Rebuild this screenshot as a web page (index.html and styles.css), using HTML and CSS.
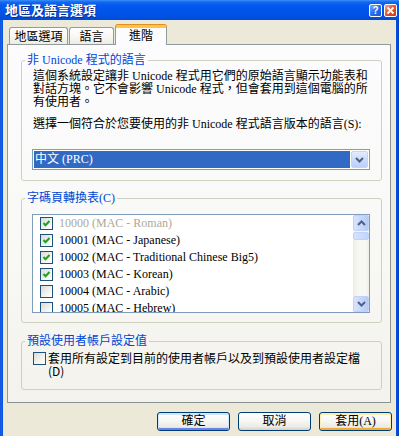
FILE: index.html
```html
<!DOCTYPE html>
<html lang="zh-Hant">
<head>
<meta charset="utf-8">
<title>地區及語言選項</title>
<link rel="stylesheet" href="styles.css">
</head>
<body>
<div class="window">
  <div class="titlebar">
    <span class="title">地區及語言選項</span>
    <div class="caption-buttons">
      <span class="cbtn help">?</span>
      <span class="cbtn close"><svg width="11" height="11" viewBox="0 0 11 11"><path d="M2.5 2.5 L8.5 8.5 M8.5 2.5 L2.5 8.5" stroke="#fff" stroke-width="1.8" fill="none"/></svg></span>
    </div>
  </div>
  <div class="client">
    <div class="tabs">
      <div class="tab t1">地區選項</div>
      <div class="tab t2">語言</div>
      <div class="tab active">進階</div>
    </div>
    <div class="panel">
      <fieldset class="group g1">
        <legend>非 Unicode 程式的語言</legend>
        <p class="desc">這個系統設定讓非 Unicode 程式用它們的原始語言顯示功能表和<br>對話方塊。它不會影響 Unicode 程式，但會套用到這個電腦的所<br>有使用者。</p>
        <p class="label">選擇一個符合於您要使用的非 Unicode 程式語言版本的語言(S):</p>
        <div class="combo">
          <div class="combo-value">中文 (PRC)</div>
          <div class="combo-btn"><svg width="9" height="6" viewBox="0 0 9 6"><polyline points="1,1 4.5,4.5 8,1" stroke="#4d6185" stroke-width="2" fill="none"/></svg></div>
        </div>
      </fieldset>
      <fieldset class="group g2">
        <legend>字碼頁轉換表(C)</legend>
        <div class="listbox">
          <div class="items">
            <div class="item disabled"><span class="chk"><svg width="11" height="11" viewBox="0 0 11 11"><polyline points="2.5,5 4.5,7.2 8.5,3" stroke="#21a121" stroke-width="2" fill="none"/></svg></span>10000 (MAC - Roman)</div>
            <div class="item"><span class="chk"><svg width="11" height="11" viewBox="0 0 11 11"><polyline points="2.5,5 4.5,7.2 8.5,3" stroke="#21a121" stroke-width="2" fill="none"/></svg></span>10001 (MAC - Japanese)</div>
            <div class="item"><span class="chk"><svg width="11" height="11" viewBox="0 0 11 11"><polyline points="2.5,5 4.5,7.2 8.5,3" stroke="#21a121" stroke-width="2" fill="none"/></svg></span>10002 (MAC - Traditional Chinese Big5)</div>
            <div class="item"><span class="chk"><svg width="11" height="11" viewBox="0 0 11 11"><polyline points="2.5,5 4.5,7.2 8.5,3" stroke="#21a121" stroke-width="2" fill="none"/></svg></span>10003 (MAC - Korean)</div>
            <div class="item"><span class="chk"></span>10004 (MAC - Arabic)</div>
            <div class="item"><span class="chk"></span>10005 (MAC - Hebrew)</div>
          </div>
          <div class="vscroll">
            <div class="sbtn"><svg width="9" height="6" viewBox="0 0 9 6"><polyline points="1,5 4.5,1.5 8,5" stroke="#4d6185" stroke-width="2" fill="none"/></svg></div>
            <div class="thumb"></div>
            <div class="track"></div>
            <div class="sbtn"><svg width="9" height="6" viewBox="0 0 9 6"><polyline points="1,1 4.5,4.5 8,1" stroke="#4d6185" stroke-width="2" fill="none"/></svg></div>
          </div>
        </div>
      </fieldset>
      <fieldset class="group g3">
        <legend>預設使用者帳戶設定值</legend>
        <div class="option"><span class="chk"></span><span class="option-text">套用所有設定到目前的使用者帳戶以及到預設使用者設定檔<br>(D)</span></div>
      </fieldset>
    </div>
    <div class="buttons">
      <button class="btn default">確定</button>
      <button class="btn">取消</button>
      <button class="btn hot">套用(A)</button>
    </div>
  </div>
</div>
</body>
</html>
```
FILE: styles.css
```css
* { box-sizing: border-box; }
html, body { margin: 0; padding: 0; }
body {
  width: 399px;
  height: 436px;
  overflow: hidden;
  font-family: "Liberation Serif", "Noto Sans CJK TC", serif;
  font-size: 12px;
  color: #000;
  background: #0553e6;
}
.window {
  display: flex;
  flex-direction: column;
  height: 436px;
  padding: 0 3px;
  background: linear-gradient(to right, #0a47c9 0, #1d6af2 1px, #0656e8 2px, #0553e6 3px, #0553e6 396px, #0446d6 398px, #0338b8 399px);
}
.titlebar {
  height: 20px;
  margin: 0 -3px;
  display: flex;
  align-items: center;
  justify-content: space-between;
  padding: 0 2px 0 5px;
  background: linear-gradient(to bottom, #3d8ff7 0, #1469f2 2px, #0459ee 5px, #0055ea 50%, #0052e4 80%, #004ad8 100%);
}
.title {
  font-family: "Noto Sans CJK TC", sans-serif;
  font-weight: bold;
  font-size: 13px;
  line-height: 16px;
  color: #fff;
  text-shadow: 1px 1px 0 #0a2a8a;
}
.caption-buttons { display: flex; gap: 2px; }
.cbtn {
  width: 13px;
  height: 13px;
  border: 1px solid #fff;
  border-radius: 2px;
  display: flex;
  align-items: center;
  justify-content: center;
  color: #fff;
  font-family: "Liberation Sans", sans-serif;
  font-weight: bold;
  font-size: 10px;
  line-height: 11px;
}
.help { background: linear-gradient(135deg, #7ab0fb, #2a6cf0 50%, #1652dc); }
.close { background: linear-gradient(135deg, #f1a58c, #e2542e 50%, #c33a14); }
.client {
  flex: 1;
  display: flex;
  flex-direction: column;
  background: #ece9d8;
  padding: 5px 5px 0 4px;
}
.tabs {
  height: 19px;
  display: flex;
  align-items: flex-end;
  padding-left: 2px;
}
.tab {
  height: 17px;
  border: 1px solid #919b9c;
  border-bottom: none;
  border-radius: 3px 3px 0 0;
  background: linear-gradient(#ffffff, #f6f6f2 60%, #ecebe6);
  font-family: "Noto Sans CJK TC", sans-serif;
  font-size: 12px;
  line-height: 16px;
  text-align: center;
}
.t1 { width: 59px; margin-right: 1px; }
.t2 { width: 45px; }
.tab.active {
  width: 52px;
  height: 20px;
  margin-left: 1px;
  margin-bottom: -1px;
  position: relative;
  z-index: 1;
  border-top: 3px solid #ffc83c;
  box-shadow: inset 0 0 0 0 transparent, 0 -1px 0 0 #e68b2c;
  background: #fcfcfe;
  line-height: 14px;
}
.panel {
  height: 359px;
  border: 1px solid #919b9c;
  border-right-color: #8a9294;
  border-bottom-color: #8a9294;
  background: linear-gradient(#fcfcfe, #f8f8f5 60%, #f3f2ec);
  padding: 0 8px 0 13px;
  display: flex;
  flex-direction: column;
}
.group {
  margin: 0;
  min-width: 0;
  border: 1px solid #d0d0bf;
  border-radius: 3px;
  padding: 3px 11px 10px 10px;
}
.group legend {
  margin-left: -7px;
  padding: 0 2px;
  color: #0046d5;
  font-size: 12px;
  line-height: 14px;
}
.g1 { margin-top: 8px; }
.g2 { margin-top: 10px; padding-top: 9px; padding-bottom: 9px; }
.g3 { margin-top: 11px; padding-top: 3px; padding-bottom: 12px; }
.desc, .label {
  margin: 0 0 0 1px;
  line-height: 13px;
  white-space: nowrap;
}
.label { margin-top: 9px; }
.combo {
  margin-top: 18px;
  height: 21px;
  border: 1px solid #7f9db9;
  background: #fff;
  padding: 1px;
  display: flex;
}
.combo-value {
  flex: 1;
  background: #316ac5;
  color: #fff;
  line-height: 17px;
  padding-left: 1px;
}
.combo-btn {
  width: 17px;
  margin-left: 1px;
  border: 1px solid #c2d3fc;
  border-radius: 2px;
  background: linear-gradient(#e3ecfd, #cddcfc 50%, #bccff9);
  display: flex;
  align-items: center;
  justify-content: center;
}
.listbox {
  height: 99px;
  border: 1px solid #7f9db9;
  background: #fff;
  display: flex;
}
.items {
  flex: 1;
  overflow: hidden;
  padding: 0 0 0 7px;
}
.item {
  height: 17px;
  display: flex;
  align-items: center;
  gap: 6px;
  white-space: nowrap;
  line-height: 17px;
}
.item.disabled { color: #aca899; }
.chk {
  flex: none;
  width: 13px;
  height: 13px;
  border: 1px solid #1c5180;
  background: linear-gradient(135deg, #dcdcd5, #f4f4f0 60%, #fff);
  display: flex;
  align-items: center;
  justify-content: center;
}
.vscroll {
  width: 16px;
  display: flex;
  flex-direction: column;
  background: #f5f5f0;
}
.sbtn {
  height: 16px;
  border: 1px solid #c1d2f9;
  border-radius: 2px;
  background: linear-gradient(to right, #d9e4fd, #c4d5fb 60%, #b5c9f7);
  display: flex;
  align-items: center;
  justify-content: center;
}
.thumb {
  height: 8px;
  margin-top: 1px;
  border: 1px solid #c1d2f9;
  border-radius: 2px;
  background: linear-gradient(to right, #d6e2fd, #c3d4fb);
}
.track {
  flex: 1;
  background: linear-gradient(to right, #eeede5, #f7f7f3 30%, #f7f7f3 80%, #eeede5);
}
.option {
  display: flex;
  align-items: flex-start;
  gap: 2px;
  padding-left: 1px;
}
.option .chk { margin-top: 1px; }
.option-text {
  line-height: 13px;
  white-space: nowrap;
  font-family: "Noto Sans CJK TC", sans-serif;
}
.buttons {
  display: flex;
  justify-content: flex-end;
  gap: 8px;
  margin-top: 9px;
  margin-right: -1px;
}
.btn {
  width: 73px;
  height: 19px;
  padding: 0;
  border: 1px solid #003c74;
  border-radius: 3px;
  background: linear-gradient(#ffffff, #f7f7f4 45%, #ecebe6 80%, #d6d0c5);
  font-family: "Liberation Serif", "Noto Sans CJK TC", serif;
  font-size: 12px;
  line-height: 17px;
  color: #000;
}
.btn.default { box-shadow: inset 0 1px 0 1px #cee7ff, inset 0 -1px 0 1px #6982ee; }
.btn.hot { box-shadow: inset 0 1px 0 1px #ffecb5, inset 0 -1px 0 1px #f5ab32; }
```
